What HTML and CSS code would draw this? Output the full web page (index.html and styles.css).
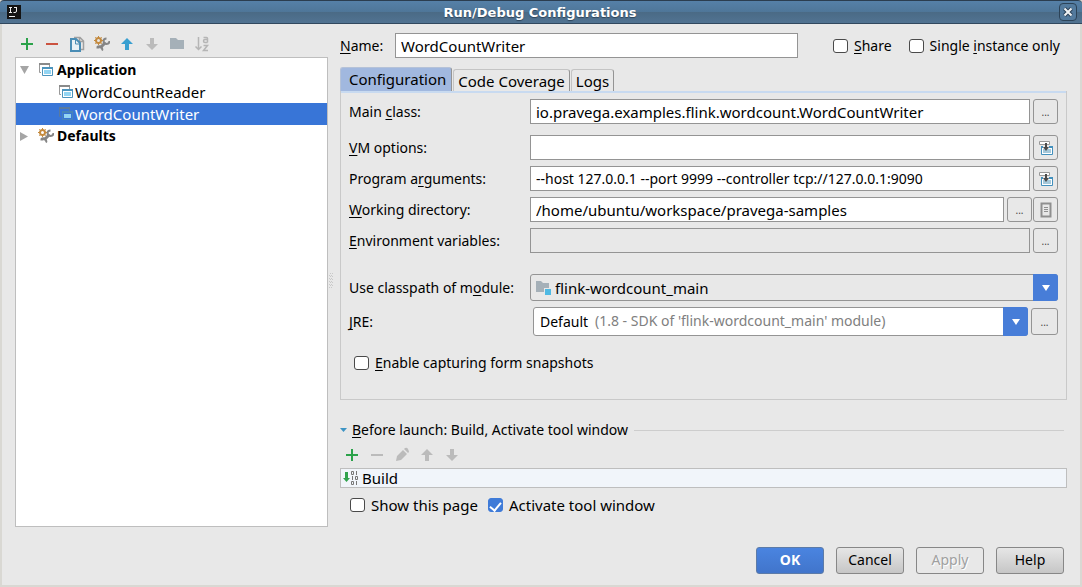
FILE: index.html
```html
<!DOCTYPE html>
<html lang="en">
<head>
<meta charset="utf-8">
<title>Run/Debug Configurations</title>
<link rel="stylesheet" href="styles.css">
</head>
<body>
<svg class="defs" width="0" height="0" aria-hidden="true">
  <symbol id="plus" viewBox="0 0 16 16"><path d="M7 2h2v5h5v2H9v5H7V9H2V7h5z"/></symbol>
  <symbol id="minus" viewBox="0 0 16 16"><path d="M2 7h12v2H2z"/></symbol>
  <symbol id="up" viewBox="0 0 16 16"><path d="M8 2l6 6h-4v6H6V8H2z"/></symbol>
  <symbol id="down" viewBox="0 0 16 16"><path d="M6 2h4v6h4l-6 6-6-6h4z"/></symbol>
  <symbol id="pencil" viewBox="0 0 16 16"><path d="M2 14l1-5 6-6 4 4-6 6zM10 2l1-1q2-1 3 1t1 3l-1 1z"/></symbol>
  <symbol id="app" viewBox="0 0 16 16">
    <path d="M3 10.500H1.500V2.500M11.500 2v3" fill="none" stroke="#999"/><path d="M1 1h11v2H1z" fill="#8a8a8a"/>
    <path d="M4.500 5.500h10v8h-10z" fill="#fff" stroke="#4c94bd"/><path d="M4 5h11v2H4z" fill="#4c94bd"/><path d="M6 8h7v4H6z" fill="#93d5f3"/>
  </symbol>
  <symbol id="app-sel" viewBox="0 0 16 16">
    <path d="M3 10.500H1.500V2.500M11.500 2v3" fill="none" stroke="#5a7a9e"/><path d="M1 1h11v2H1z" fill="#5a7a9e"/>
    <path d="M4.500 5.500h10v8h-10z" fill="#3875d7" stroke="#4785b8"/><path d="M4 5h11v2H4z" fill="#4785b8"/><path d="M6 8h7v4H6z" fill="#93d5f3"/>
  </symbol>
  <symbol id="tools" viewBox="0 0 16 16">
    <path d="M11.500 6.500L6 12" stroke="#858585" stroke-width="3" fill="none"/>
    <path d="M12.500 2.500q-3 0-3 2.500t3 3q3 0 3-3M3 11.500q2-2 4-.500t1 3.500M2.500 11.500h3" stroke="#858585" stroke-width="2" fill="none"/>
    <circle cx="4.500" cy="4.500" r="2.500" fill="none" stroke="#c48a3e" stroke-width="2"/>
    <path d="M4.500 0v2M4.500 7v2M0 4.500h2M7 4.500h2M1.300 1.300l1.400 1.400M6.300 6.300l1.400 1.400M1.300 7.700l1.400-1.400M6.300 2.700l1.400-1.400" stroke="#c48a3e"/>
  </symbol>
  <symbol id="insert" viewBox="0 0 16 16">
    <path d="M1.500 1.500h10v3h-10z" fill="#fff" stroke="#999"/><path d="M3.500 6.500h11v8h-11z" fill="#fff" stroke="#4390bd"/><path d="M3 6h12v2H3z" fill="#4390bd"/><path d="M5 9h8v4H5z" fill="#a5c8da"/><path d="M5 5h6v4H5z" fill="#e8e8e8"/><path d="M7 3h2v4h2l-3 4-3-4h2z" fill="#4a4a4a"/>
  </symbol>
</svg>
<div class="dialog">
  <header class="titlebar">
    <svg class="logo" width="14" height="14" viewBox="0 0 14 14" aria-hidden="true"><path d="M0 0h14v14H0z" fill="#141414"/><path d="M2 2.500h3M3.500 2v5M2 7.500h3M7 2.500h3M9.500 2v4q0 1.500-1.500 1.500H6.500M2 11.500h6" stroke="#eee" fill="none"/></svg>
    <h1>Run/Debug Configurations</h1>
    <button class="close" aria-label="Close"><svg width="10" height="10" viewBox="0 0 10 10"><path d="M1.500 1.500l7 7M8.500 1.500l-7 7" stroke="#2c4358" stroke-width="4"/><path d="M1.500 1.500l7 7M8.500 1.500l-7 7" stroke="#f0f3f5" stroke-width="2"/></svg></button>
  </header>
  <main class="content">
    <section class="sidebar">
      <div class="toolbar">
        <button class="tool green" aria-label="Add"><svg><use href="#plus"/></svg></button>
        <button class="tool red" aria-label="Remove"><svg><use href="#minus"/></svg></button>
        <button class="tool" aria-label="Copy"><svg viewBox="0 0 16 16"><path d="M5 1.500h6l3.500 3.500v8.500h-3M10.500 1.500v4h4" fill="none" stroke="#a0a0a0" stroke-width="1.500"/><path d="M2 3h5l4 4v8H2z" fill="#e8f1f6" stroke="#4a8db5" stroke-width="2"/><path d="M6.500 4v4H10" fill="none" stroke="#4a8db5"/></svg></button>
        <button class="tool" aria-label="Edit defaults"><svg><use href="#tools"/></svg></button>
        <button class="tool blue" aria-label="Move up"><svg><use href="#up"/></svg></button>
        <button class="tool" aria-label="Move down" disabled><svg><use href="#down"/></svg></button>
        <button class="tool folder" aria-label="New folder"><svg viewBox="0 0 16 16"><path d="M1 2h6l2 2h6v9H1z"/></svg></button>
        <button class="tool" aria-label="Sort" disabled><svg viewBox="0 0 16 16"><path d="M4.500 1v12M1.500 10.500l3 3 3-3" fill="none" stroke="#b5b5b5" stroke-width="1.500"/><path d="M9.500 1.500h3q1 0 1 1V6.500M13.500 3.500H11q-1.500 0-1.500 1.500t1.500 1.500h2.500M9.500 9.500h4l-4 5h4.500" fill="none" stroke="#b5b5b5" stroke-width="1.500"/></svg></button>
      </div>
      <ul class="tree" role="tree">
        <li role="treeitem" aria-expanded="true"><div class="node group"><svg class="arrow" viewBox="0 0 10 10"><path d="M1 1h9L5.500 9z"/></svg><svg class="icon"><use href="#app"/></svg><span>Application</span></div>
          <ul role="group">
            <li role="treeitem" class="node leaf"><svg class="icon"><use href="#app"/></svg><span>WordCountReader</span></li>
            <li role="treeitem" class="node leaf selected" aria-selected="true"><svg class="icon"><use href="#app-sel"/></svg><span>WordCountWriter</span></li>
          </ul>
        </li>
        <li role="treeitem" aria-expanded="false"><div class="node group"><svg class="arrow" viewBox="0 0 10 10"><path d="M1 1v9l8-4.500z"/></svg><svg class="icon"><use href="#tools"/></svg><span>Defaults</span></div></li>
      </ul>
    </section>
    <div class="splitter" role="separator" aria-orientation="vertical"></div>
    <section class="editor">
      <div class="name-row">
        <label class="name-label" for="name"><u>N</u>ame:</label>
        <input class="field wide" id="name" type="text" value="WordCountWriter">
        <label class="check share"><input type="checkbox"><span><u>S</u>hare</span></label>
        <label class="check single"><input type="checkbox"><span>Single <u>i</u>nstance only</span></label>
      </div>
      <div class="tabs" role="tablist">
        <button class="tab active" role="tab" aria-selected="true">Configuration</button>
        <button class="tab" role="tab">Code Coverage</button>
        <button class="tab" role="tab">Logs</button>
      </div>
      <form class="panel">
        <div class="row main"><label for="cls">Main <u>c</u>lass:</label><div class="controls"><input class="field wide" id="cls" type="text" value="io.pravega.examples.flink.wordcount.WordCountWriter"><button type="button" class="small">...</button></div></div>
        <div class="row"><label for="vm"><u>V</u>M options:</label><div class="controls"><input class="field" id="vm" type="text"><button type="button" class="small" aria-label="Expand VM options"><svg><use href="#insert"/></svg></button></div></div>
        <div class="row"><label for="args">Program a<u>r</u>guments:</label><div class="controls"><input class="field" id="args" type="text" value="--host 127.0.0.1 --port 9999 --controller tcp://127.0.0.1:9090"><button type="button" class="small" aria-label="Expand arguments"><svg><use href="#insert"/></svg></button></div></div>
        <div class="row"><label for="dir"><u>W</u>orking directory:</label><div class="controls"><input class="field wide" id="dir" type="text" value="/home/ubuntu/workspace/pravega-samples"><div class="pair"><button type="button" class="small">...</button><button type="button" class="small" aria-label="Insert macro"><svg viewBox="0 0 16 16"><path d="M3.500 1.500h9v13h-9z" fill="none" stroke="#8f8f8f" stroke-width="2"/><path d="M6 5.500h4M6 7.500h4M6 9.500h4" stroke="#8f8f8f"/></svg></button></div></div></div>
        <div class="row"><label for="env"><u>E</u>nvironment variables:</label><div class="controls"><input class="field readonly" id="env" type="text" readonly><button type="button" class="small">...</button></div></div>
        <div class="row module"><label for="module">Use classpath of m<u>o</u>dule:</label><div class="combo gray"><select id="module"><option>flink-wordcount_main</option></select><svg class="combo-icon" viewBox="0 0 16 16"><path d="M1 2h5l2 2h6v9H1z" fill="#a5b0b8"/><path d="M9 9h7v7H9z" fill="#e8e8e8"/><path d="M10 10h6v6h-6z" fill="#4fb9e3"/></svg><span class="drop"></span></div></div>
        <div class="row jre"><label for="jre"><u>J</u>RE:</label><div class="controls"><div class="combo"><select id="jre"><option>Default</option></select><span class="hint">(1.8 - SDK of 'flink-wordcount_main' module)</span><span class="drop"></span></div><button type="button" class="small large">...</button></div></div>
        <label class="check snapshots"><input type="checkbox"><span><u>E</u>nable capturing form snapshots</span></label>
      </form>
      <section class="before">
        <h2><svg viewBox="0 0 8 6"><path d="M0 1h7L3.500 5z" fill="#3d94c4"/></svg><span><u>B</u>efore launch: Build, Activate tool window</span></h2>
        <div class="toolbar">
          <button class="tool green" aria-label="Add task"><svg><use href="#plus"/></svg></button>
          <button class="tool" aria-label="Remove task" disabled><svg><use href="#minus"/></svg></button>
          <button class="tool" aria-label="Edit task" disabled><svg><use href="#pencil"/></svg></button>
          <button class="tool" aria-label="Task up" disabled><svg><use href="#up"/></svg></button>
          <button class="tool" aria-label="Task down" disabled><svg><use href="#down"/></svg></button>
        </div>
        <ul class="tasks"><li><svg class="icon" viewBox="0 0 16 16"><path d="M2 2h3v6h2l-3.500 4L0 8h2z" fill="#31a24c"/><path d="M8.500 1.500h2v3h-2zM13.500 1v4M9.500 6v4M12.500 6.500h2v3h-2zM8.500 11.500h2v3h-2zM13.500 11v4" fill="none" stroke="#777"/></svg><span>Build</span></li></ul>
        <div class="checks">
          <label class="check"><input type="checkbox"><span>Show this page</span></label>
          <label class="check"><input type="checkbox" checked><span>Activate tool window</span></label>
        </div>
      </section>
    </section>
  </main>
  <footer class="actions">
    <button class="action primary">OK</button>
    <button class="action">Cancel</button>
    <button class="action" disabled>Apply</button>
    <button class="action">Help</button>
  </footer>
</div>
</body>
</html>
```

FILE: styles.css
```css
* { box-sizing: border-box; }
body, h1, h2, ul { margin: 0; padding: 0; }
ul { list-style: none; }
body { background: #d9d8d3; color: #000; }
body, button, input, select { font-family: "Noto Sans", "Open Sans", sans-serif; font-size: 14px; line-height: 20px; }
button { margin: 0; padding: 0; color: inherit; }
svg { display: block; fill: currentColor; flex: none; }
.defs { position: absolute; }
u { text-decoration: underline; text-underline-offset: 2px; text-decoration-skip-ink: none; }

.dialog { min-height: 100vh; display: flex; flex-direction: column; border: 0 solid #d9d8d3; border-width: 0 2px 2px; background: #e8e8e8; }
.titlebar { height: 24px; margin: 0 -2px; padding: 0 5px 0 7px; display: flex; align-items: center; background: linear-gradient(#5580a8, #4f7698 50%, #4a6a85 50%, #517392); border-top: 1px solid #2b3d4f; border-bottom: 1px solid #31485e; border-radius: 4px 4px 0 0; color: #fff; }
.titlebar h1 { flex: 1; text-align: center; font: bold 13px/20px "Noto Sans", sans-serif; font-size: 13px; padding-top: 2px; text-shadow: 0 1px 1px #2c4358; }
.titlebar h1 { font-family: "DejaVu Sans", sans-serif; }
.close { width: 18px; height: 18px; display: grid; place-items: center; border: 1px solid #2c4358; border-radius: 4px; background: #537a9d; }

.content { display: flex; flex: 1; padding: 9px 13px 0; }
.sidebar { width: 313px; flex: none; display: flex; flex-direction: column; }
.toolbar { display: flex; gap: 9px; padding: 0 4px; }
.tool { width: 16px; height: 16px; border: 0; background: none; color: #777; }
.tool svg, .icon, .small svg { width: 16px; height: 16px; }
.tool:disabled { color: #bbb; }
.tool.green { color: #2ba24a; }
.tool.red { color: #cb5340; }
.tool.blue { color: #389fd0; }
.tool.folder { color: #a5b0b8; }
.sidebar .toolbar { padding: 3px 4px 5px; }
.tree { flex: 1; border: 1px solid #bebebe; background: #fff; padding-top: 1px; }
.node { height: 22px; display: flex; align-items: center; font-size: 15px; }
.group { padding-left: 3px; font-size: 14px; font-weight: bold; }
.group .icon { margin: 0 2px 0 9px; }
.group span { padding-left: 1px; }
.leaf { padding-left: 42px; gap: 1px; }
.selected { background: #3875d7; color: #fff; }
.arrow { width: 10px; height: 10px; color: #a5a5a5; }

.splitter { width: 12px; flex: none; display: flex; align-items: center; }
.splitter::before { content: ""; width: 4px; height: 15px; margin-left: 1px; background: conic-gradient(#aaa 25%, transparent 0 50%, #aaa 0 75%, transparent 0) 0 0 / 2px 3px; opacity: .5; }
.editor { flex: 1; min-width: 0; }
.name-row { display: flex; align-items: center; padding-right: 7px; }
.name-label { width: 55px; }
.field { flex: 1; min-width: 0; height: 25px; padding: 0 5px; border: 1px solid #949494; background: #fff; color: #000; border-radius: 0; }
.wide { font-size: 15px; }
.readonly { background: #e8e8e8; }
.check { display: flex; align-items: center; gap: 6px; white-space: nowrap; }
.check input { appearance: none; width: 15px; height: 14px; margin: 0; flex: none; border: 1px solid #4a4a4a; border-radius: 3px; background: #fff; }
.check input:checked { border-color: #3f7bd8; background: #3f7bd8; display: grid; place-items: center; }
.check input:checked::before { content: ""; width: 5px; height: 9px; border: solid #fff; border-width: 0 2px 2px 0; transform: rotate(40deg); }
.share { margin-left: 35px; }
.single { margin-left: 17px; }

.tabs { display: flex; align-items: flex-end; gap: 1px; height: 24px; margin-top: 9px; }
.tab { height: 22px; padding: 0 4px; border: 1px solid #c4c4c4; border-right: 1px solid #949494; border-bottom: 0; border-radius: 3px 3px 0 0; background: #e8e8e8; font-size: 15px; }
.active { height: 24px; padding: 0 5px 2px 8px; background: #a1b8df; border-color: #b5c2d8; border-right-color: #949494; }
.panel { border: 1px solid #c9c9c9; border-top: 0; padding: 8px 8px 26px; display: flex; flex-direction: column; gap: 6px; box-shadow: inset 0 2px #c8daf0; }
.row { display: grid; grid-template-columns: 181px 1fr; align-items: center; }
.row > label { white-space: nowrap; }
.main { margin-bottom: 5px; }
.controls { display: flex; align-items: center; gap: 3px; min-width: 0; }
.pair { display: flex; gap: 1px; }
.small { width: 25px; height: 25px; display: grid; place-items: center; border: 1px solid #949494; border-radius: 3px; background: #e8e8e8; color: #444; font-size: 10px; line-height: 12px; }
.large { width: 27px; height: 27px; }
.module { margin-top: 15px; }
.combo { position: relative; flex: 1; min-width: 0; }
.combo select { appearance: none; display: block; width: 100%; height: 29px; padding: 0 28px 0 6px; border: 1px solid #949494; border-radius: 3px; background: #fff; color: #000; }
.combo.gray select { height: 27px; padding-left: 24px; background: #e8e8e8; font-size: 15px; }
.combo-icon { position: absolute; left: 5px; top: 5px; width: 16px; height: 16px; pointer-events: none; }
.hint { position: absolute; left: 62px; top: 4px; color: #808080; white-space: nowrap; pointer-events: none; }
.drop { position: absolute; top: 0; right: 0; bottom: 0; width: 25px; display: grid; place-items: center; border-radius: 0 3px 3px 0; background: #477dd8; pointer-events: none; }
.drop::before { content: ""; border: 4px solid transparent; border-top: 6px solid #fff; border-bottom: 0; }
.jre .controls { padding-left: 3px; }
.snapshots { margin: 11px 0 0 5px; }

.before { padding-top: 20px; }
.before h2 { display: flex; align-items: center; font-size: 14px; font-weight: normal; padding-right: 3px; }
.before h2 svg { width: 8px; height: 6px; margin-right: 4px; }
.before h2::after { content: ""; flex: 1; height: 1px; margin-left: 6px; background: #cdcdcd; }
.before .toolbar { padding: 7px 4px 5px; }
.tasks { border: 1px solid #bebebe; background: #f1f5fa; }
.tasks li { height: 18px; padding-left: 2px; display: flex; align-items: center; gap: 3px; font-size: 15px; }
.checks { display: flex; gap: 10px; padding: 7px 10px; font-size: 15px; }

.actions { display: flex; justify-content: flex-end; gap: 12px; padding: 20px 16px 11px; }
.action { width: 68px; height: 27px; padding-bottom: 2px; border: 1px solid #878787; border-radius: 3px; background: linear-gradient(#e6e6e6, #c6c6c6); }
.action:disabled { background: #e8e8e8; color: #a0a0a0; text-shadow: 1px 1px #fff; }
.primary { border-color: #5c7ba8; background: linear-gradient(#4a84e0, #4175cb); color: #fff; font-weight: bold; }
```
